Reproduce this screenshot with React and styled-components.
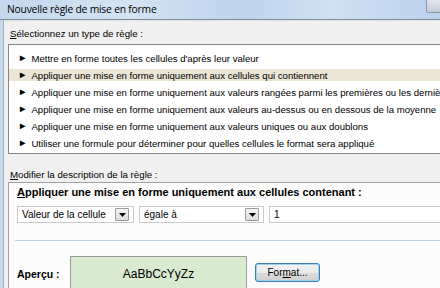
import React from "react";
import styled, { createGlobalStyle } from "styled-components";

const GlobalStyle = createGlobalStyle`
  html, body {
    margin: 0;
    padding: 0;
    width: 440px;
    height: 288px;
    overflow: hidden;
    background: #f0f0f0;
  }
`;

const Window = styled.div`
  width: 440px;
  height: 288px;
  display: flex;
  flex-direction: column;
  overflow: hidden;
  font-family: "Liberation Sans", Arial, sans-serif;
  color: #000;
`;

const TitleBar = styled.div`
  height: 19px;
  flex: none;
  display: flex;
  justify-content: space-between;
  align-items: flex-start;
  background: linear-gradient(90deg, #c2d8ee 0%, #d3e3f3 30%, #bcd4ec 55%, #cfe1f3 75%, #b9d2ec 100%);
  border-bottom: 1px solid #7e8e9f;
`;

const Title = styled.span`
  font-family: "Open Sans", sans-serif;
  font-size: 10.3px;
  line-height: 19px;
  padding-left: 7px;
  letter-spacing: -0.2px;
`;

const CornerButton = styled.div`
  width: 16px;
  height: 12px;
  margin-right: -4px;
  border: 1px solid #8d97a3;
  border-top: none;
  border-radius: 0 0 3px 3px;
  background: linear-gradient(#e3e8ee, #c4ccd6);
`;

const Frame = styled.div`
  flex: 1;
  display: flex;
  border-left: 3px solid #c5d9ec;
  min-height: 0;
`;

const Body = styled.div`
  flex: 1;
  border-left: 1px solid #a3afbb;
  border-top: 1px solid #e4e4e4;
  padding: 6px 0 0 4px;
  display: flex;
  flex-direction: column;
  min-width: 0;
`;

const Label = styled.div`
  font-size: 9.7px;
  line-height: 14px;
  padding-left: 2px;
  margin-top: ${(p) => p.$top || 0}px;
  white-space: nowrap;
`;

const Key = styled.span`
  text-decoration: underline;
`;

const ListBox = styled.div`
  margin-top: 3px;
  margin-right: -20px;
  background: #fff;
  border: 1px solid #828790;
  padding: 7px 0 4px 0;
  display: flex;
  flex-direction: column;
  gap: 5px;
`;

const Row = styled.div`
  height: 12px;
  display: flex;
  align-items: center;
  gap: 4px;
  padding-left: 9px;
  font-size: 9.6px;
  white-space: nowrap;
  background: ${(p) => (p.$selected ? "#ebe5d6" : "transparent")};
`;

const Arrow = styled.span`
  font-size: 9.5px;
  line-height: 1;
`;

const Panel = styled.div`
  margin-right: -20px;
  flex: 1;
  border: 1px solid #a0a0a0;
  background: #fcfcfc;
  padding: 1px 0 0 8px;
  display: flex;
  flex-direction: column;
`;

const Heading = styled.div`
  font-size: 11px;
  font-weight: bold;
  line-height: 16px;
  white-space: nowrap;
`;

const FieldRow = styled.div`
  margin-top: 6px;
  display: flex;
  gap: 5px;
`;

const Field = styled.div`
  width: ${(p) => p.$w || "auto"};
  flex: ${(p) => (p.$grow ? 1 : "none")};
  height: 17px;
  box-sizing: border-box;
  background: #fff;
  border: 1px solid #c9c9c9;
  display: flex;
  align-items: center;
  justify-content: space-between;
  padding-left: 4px;
  font-size: 10px;
`;

const DropButton = styled.div`
  width: 12px;
  height: 11px;
  margin-right: 4px;
  border: 1px solid #9a9a9a;
  border-radius: 1px;
  background: linear-gradient(#f6f6f6, #dcdcdc);
  display: flex;
  align-items: center;
  justify-content: center;
`;

const Separator = styled.div`
  margin: 17px 0 0 -2px;
  height: 1px;
  background: #b9d1e6;
`;

const PreviewRow = styled.div`
  margin-top: 15px;
  display: flex;
  align-items: flex-start;
`;

const PreviewLabel = styled.div`
  width: 53px;
  flex: none;
  font-size: 10.5px;
  font-weight: bold;
  padding-top: 12px;
`;

const Sample = styled.div`
  width: 177px;
  height: 40px;
  flex: none;
  border: 1px solid #9a9a9a;
  background: #d8ebcf;
  text-align: center;
  font-size: 12px;
  padding-top: 10px;
  box-sizing: border-box;
`;

const FormatButton = styled.div`
  margin: 7px 0 0 8px;
  width: 65px;
  height: 19px;
  box-sizing: border-box;
  border: 1px solid #3c7fb1;
  border-radius: 3px;
  box-shadow: inset 0 0 0 1px #9bd3ef;
  background: linear-gradient(#f2f2f2 0%, #ebebeb 50%, #dddddd 51%, #cfcfcf 100%);
  font-size: 10px;
  display: flex;
  align-items: center;
  justify-content: center;
`;

const Caret = () => (
  <svg width="7" height="4" viewBox="0 0 7 4">
    <path d="M0 0h7L3.5 4z" fill="#000" />
  </svg>
);

const rules = [
  "Mettre en forme toutes les cellules d'après leur valeur",
  "Appliquer une mise en forme uniquement aux cellules qui contiennent",
  "Appliquer une mise en forme uniquement aux valeurs rangées parmi les premières ou les dernières",
  "Appliquer une mise en forme uniquement aux valeurs au-dessus ou en dessous de la moyenne",
  "Appliquer une mise en forme uniquement aux valeurs uniques ou aux doublons",
  "Utiliser une formule pour déterminer pour quelles cellules le format sera appliqué",
];

export default function App() {
  return (
    <Window>
      <GlobalStyle />
      <TitleBar>
        <Title>Nouvelle règle de mise en forme</Title>
        <CornerButton />
      </TitleBar>
      <Frame>
        <Body>
          <Label>
            <Key>S</Key>électionnez un type de règle :
          </Label>
          <ListBox>
            {rules.map((r, i) => (
              <Row key={i} $selected={i === 1}>
                <Arrow>►</Arrow>
                {r}
              </Row>
            ))}
          </ListBox>
          <Label $top={14}>
            <Key>M</Key>odifier la description de la règle :
          </Label>
          <Panel>
            <Heading>
              <Key>A</Key>ppliquer une mise en forme uniquement aux cellules contenant :
            </Heading>
            <FieldRow>
              <Field $w="117px">
                Valeur de la cellule
                <DropButton>
                  <Caret />
                </DropButton>
              </Field>
              <Field $w="125px">
                égale à
                <DropButton>
                  <Caret />
                </DropButton>
              </Field>
              <Field $grow>1</Field>
            </FieldRow>
            <Separator />
            <PreviewRow>
              <PreviewLabel>Aperçu :</PreviewLabel>
              <Sample>AaBbCcYyZz</Sample>
              <FormatButton>
                For<Key>m</Key>at...
              </FormatButton>
            </PreviewRow>
          </Panel>
        </Body>
      </Frame>
    </Window>
  );
}
